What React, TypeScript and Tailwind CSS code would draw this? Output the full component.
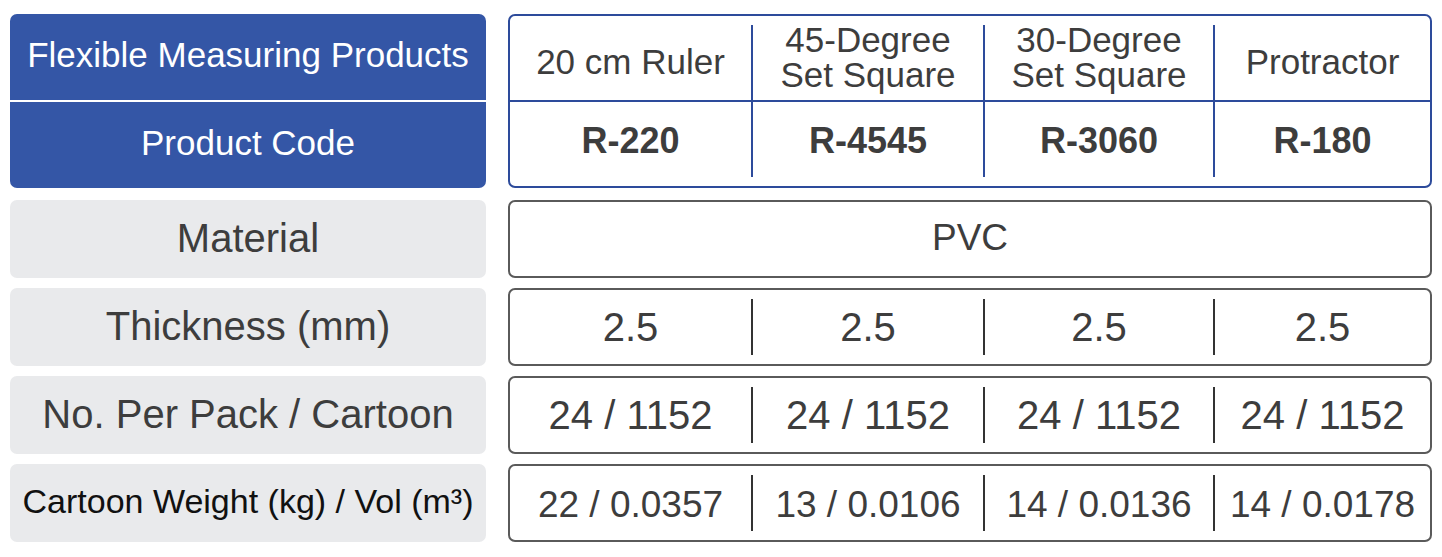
import React from "react";

const products = ["20 cm Ruler", "45-Degree|Set Square", "30-Degree|Set Square", "Protractor"];
const codes = ["R-220", "R-4545", "R-3060", "R-180"];

const cellW = ["w-[241px]", "w-[230px]", "w-[228px]", "flex-1"];

function Divider() {
  return <div className="w-[2px] self-stretch my-[9px] bg-[#333333] shrink-0" />;
}

function DataRow({ label, values, labelClass, valueClass }: { label: React.ReactNode; values: string[]; labelClass: string; valueClass: string }) {
  return (
    <div className="flex h-[78px] gap-[22px]">
      <div className={`w-[476px] shrink-0 rounded-[7px] bg-[#e9eaec] flex items-center justify-center pb-[3px] ${labelClass}`}>{label}</div>
      <div className="flex-1 flex rounded-[7px] border-2 border-[#5a5a5a] bg-white">
        {values.length === 1 ? (
          <div className={`flex-1 flex items-center justify-center pb-[2px] ${valueClass}`}>{values[0]}</div>
        ) : (
          values.map((v, i) => (
            <React.Fragment key={i}>
              {i > 0 && <Divider />}
              <div className={`${cellW[i]} shrink-0 flex items-center justify-center ${valueClass}`}>{v}</div>
            </React.Fragment>
          ))
        )}
      </div>
    </div>
  );
}

export default function App() {
  return (
    <div className="w-[1442px] h-[557px] bg-white pt-[14px] pl-[10px] pr-[10px] font-['Liberation_Sans',Arial,sans-serif] text-[#3d3d3d]">
      <div className="flex h-[174px] gap-[22px]">
        <div className="w-[476px] shrink-0 rounded-[7px] bg-[#3456a6] flex flex-col text-white">
          <div className="flex-1 flex items-center justify-center text-[35px] leading-none pb-[5px]">Flexible Measuring Products</div>
          <div className="h-[2px] bg-white" />
          <div className="flex-1 flex items-center justify-center text-[35px] leading-none pb-[5px]">Product Code</div>
        </div>
        <div className="flex-1 rounded-[7px] border-2 border-[#2d4b9b] bg-white grid grid-cols-[241px_2px_230px_2px_228px_2px_1fr] grid-rows-[1fr_2px_1fr]">
          {products.map((p, i) => {
            const parts = p.split("|");
            return (
              <div
                key={"p" + i}
                className={`row-start-1 flex flex-col items-center justify-center text-[35px] leading-[35px] ${parts.length === 1 ? "pt-[6px]" : "pb-[3px]"}`}
                style={{ gridColumnStart: i * 2 + 1 }}
              >
                {parts.map((t, j) => (
                  <span key={j}>{t}</span>
                ))}
              </div>
            );
          })}
          <div className="row-start-2 col-start-1 col-end-8 bg-[#2d4b9b]" />
          {codes.map((c, i) => (
            <div
              key={"c" + i}
              className="row-start-3 flex items-center justify-center text-[36px] font-bold leading-none pb-[6px]"
              style={{ gridColumnStart: i * 2 + 1 }}
            >
              {c}
            </div>
          ))}
          {[2, 4, 6].map((c) => (
            <div
              key={"d" + c}
              className="row-start-1 row-end-4 my-[9px] bg-[#2d4b9b]"
              style={{ gridColumnStart: c }}
            />
          ))}
        </div>
      </div>
      <div className="mt-[12px] flex flex-col gap-[10px]">
        <DataRow label="Material" values={["PVC"]} labelClass="text-[40px]" valueClass="text-[37px]" />
        <DataRow label="Thickness (mm)" values={["2.5", "2.5", "2.5", "2.5"]} labelClass="text-[40px]" valueClass="text-[40px]" />
        <DataRow label="No. Per Pack / Cartoon" values={["24 / 1152", "24 / 1152", "24 / 1152", "24 / 1152"]} labelClass="text-[40px]" valueClass="text-[40px]" />
        <DataRow
          label={<span>Cartoon Weight (kg) / Vol (m³)</span>}
          values={["22 / 0.0357", "13 / 0.0106", "14 / 0.0136", "14 / 0.0178"]}
          labelClass="text-[34px] text-[#111111]"
          valueClass="text-[37px] pt-[4px]"
        />
      </div>
    </div>
  );
}
